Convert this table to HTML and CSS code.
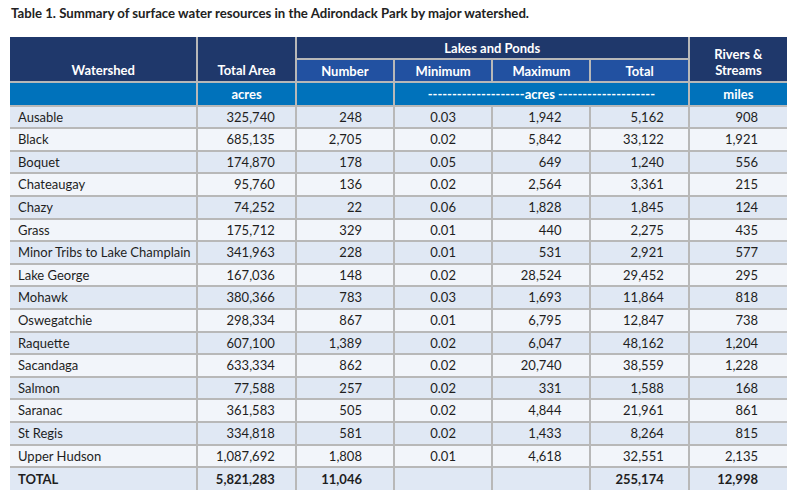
FILE: index.html
```html
<!DOCTYPE html>
<html lang="en">
<head>
<meta charset="utf-8">
<title>Table 1</title>
<link rel="stylesheet" href="styles.css">
</head>
<body>
<p class="caption">Table 1. Summary of surface water resources in the Adirondack Park by major watershed.</p>
<table class="data">
  <colgroup>
    <col class="c-name"><col class="c-num"><col class="c-num"><col class="c-num"><col class="c-num"><col class="c-num"><col class="c-num">
  </colgroup>
  <thead>
    <tr class="h1">
      <th rowspan="2" class="bottom">Watershed</th>
      <th rowspan="2" class="bottom">Total Area</th>
      <th colspan="4">Lakes and Ponds</th>
      <th rowspan="2" class="bottom">Rivers &amp;<br>Streams</th>
    </tr>
    <tr class="h2">
      <th class="sub">Number</th>
      <th class="sub">Minimum</th>
      <th class="sub">Maximum</th>
      <th class="sub">Total</th>
    </tr>
    <tr class="units">
      <th></th>
      <th>acres</th>
      <th></th>
      <th colspan="3">--------------------acres --------------------</th>
      <th>miles</th>
    </tr>
  </thead>
  <tbody>
    <tr><td class="name">Ausable</td><td class="area">325,740</td><td class="number">248</td><td class="min">0.03</td><td class="max">1,942</td><td class="tot">5,162</td><td class="riv">908</td></tr>
    <tr><td class="name">Black</td><td class="area">685,135</td><td class="number">2,705</td><td class="min">0.02</td><td class="max">5,842</td><td class="tot">33,122</td><td class="riv">1,921</td></tr>
    <tr><td class="name">Boquet</td><td class="area">174,870</td><td class="number">178</td><td class="min">0.05</td><td class="max">649</td><td class="tot">1,240</td><td class="riv">556</td></tr>
    <tr><td class="name">Chateaugay</td><td class="area">95,760</td><td class="number">136</td><td class="min">0.02</td><td class="max">2,564</td><td class="tot">3,361</td><td class="riv">215</td></tr>
    <tr><td class="name">Chazy</td><td class="area">74,252</td><td class="number">22</td><td class="min">0.06</td><td class="max">1,828</td><td class="tot">1,845</td><td class="riv">124</td></tr>
    <tr><td class="name">Grass</td><td class="area">175,712</td><td class="number">329</td><td class="min">0.01</td><td class="max">440</td><td class="tot">2,275</td><td class="riv">435</td></tr>
    <tr><td class="name">Minor Tribs to Lake Champlain</td><td class="area">341,963</td><td class="number">228</td><td class="min">0.01</td><td class="max">531</td><td class="tot">2,921</td><td class="riv">577</td></tr>
    <tr><td class="name">Lake George</td><td class="area">167,036</td><td class="number">148</td><td class="min">0.02</td><td class="max">28,524</td><td class="tot">29,452</td><td class="riv">295</td></tr>
    <tr><td class="name">Mohawk</td><td class="area">380,366</td><td class="number">783</td><td class="min">0.03</td><td class="max">1,693</td><td class="tot">11,864</td><td class="riv">818</td></tr>
    <tr><td class="name">Oswegatchie</td><td class="area">298,334</td><td class="number">867</td><td class="min">0.01</td><td class="max">6,795</td><td class="tot">12,847</td><td class="riv">738</td></tr>
    <tr><td class="name">Raquette</td><td class="area">607,100</td><td class="number">1,389</td><td class="min">0.02</td><td class="max">6,047</td><td class="tot">48,162</td><td class="riv">1,204</td></tr>
    <tr><td class="name">Sacandaga</td><td class="area">633,334</td><td class="number">862</td><td class="min">0.02</td><td class="max">20,740</td><td class="tot">38,559</td><td class="riv">1,228</td></tr>
    <tr><td class="name">Salmon</td><td class="area">77,588</td><td class="number">257</td><td class="min">0.02</td><td class="max">331</td><td class="tot">1,588</td><td class="riv">168</td></tr>
    <tr><td class="name">Saranac</td><td class="area">361,583</td><td class="number">505</td><td class="min">0.02</td><td class="max">4,844</td><td class="tot">21,961</td><td class="riv">861</td></tr>
    <tr><td class="name">St Regis</td><td class="area">334,818</td><td class="number">581</td><td class="min">0.02</td><td class="max">1,433</td><td class="tot">8,264</td><td class="riv">815</td></tr>
    <tr><td class="name">Upper Hudson</td><td class="area">1,087,692</td><td class="number">1,808</td><td class="min">0.01</td><td class="max">4,618</td><td class="tot">32,551</td><td class="riv">2,135</td></tr>
  </tbody>
  <tfoot>
    <tr class="total"><td class="name">TOTAL</td><td class="area">5,821,283</td><td class="number">11,046</td><td class="min"></td><td class="max"></td><td class="tot">255,174</td><td class="riv">12,998</td></tr>
  </tfoot>
</table>
</body>
</html>
```

FILE: styles.css
```css
html, body {
  margin: 0;
  padding: 0;
  background: #ffffff;
}

body {
  padding: 0 13px 0 10px;
  font-family: "Lato", "Open Sans", sans-serif;
  color: #1e1e1e;
}

.caption {
  margin: 0;
  padding: 5px 0 0 1px;
  height: 37px;
  box-sizing: border-box;
  font-size: 13.2px;
  font-weight: 700;
  color: #222;
}

.data {
  width: 777px;
  border-collapse: collapse;
  table-layout: fixed;
  font-size: 13px;
}

.c-name { width: 187px; }
.c-num { width: 98px; }

.data th,
.data td {
  border: 2px solid #b8b8b8;
  padding: 0;
  height: 20.6px;
  line-height: 20.6px;
  white-space: nowrap;
}

.data thead th {
  padding-top: 1px;
  height: 20.2px;
  line-height: 20.2px;
}

.data tr:first-child > * { border-top: none; }
.data tr > *:first-child { border-left: none; }
.data tr > *:last-child { border-right: none; }
.data tfoot tr > * { border-bottom: none; }

.data th {
  color: #ffffff;
  font-weight: 700;
  text-align: center;
}

.h1 th {
  background: #1f386b;
  vertical-align: middle;
}

.data .h1 th.bottom {
  vertical-align: bottom;
  line-height: 16px;
  padding-bottom: 3px;
}

.h2 th.sub {
  background: #2251a1;
}

.units th {
  background: #0072bb;
}

.data td {
  text-align: right;
}

.data td.name {
  text-align: left;
  padding-left: 8px;
}

.data td.area { padding-right: 20px; }
.data td.number { padding-right: 31px; }
.data td.min { text-align: center; }
.data td.max { padding-right: 28px; }
.data td.tot { padding-right: 24px; }
.data td.riv { padding-right: 29px; }

.data tbody tr:nth-child(odd) td { background: #e0e8f4; }
.data tbody tr:nth-child(even) td { background: #f2f5fa; }

.data tfoot td {
  background: #e0e8f4;
  font-weight: 700;
  padding-top: 1px;
  border-top: 4px double #b8b8b8;
}
```
